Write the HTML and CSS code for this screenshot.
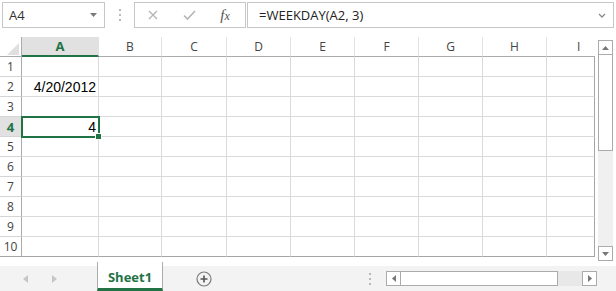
FILE: index.html
```html
<!DOCTYPE html>
<html lang="en">
<head>
    <meta charset="UTF-8">
    <title>WEEKDAY</title>
    <link rel="stylesheet" href="styles.css">
</head>
<body>
<div class="excel">
    <!-- formula bar -->
    <div class="toolbar">
        <div class="namebox">
            <span>A4</span>
            <svg class="caret" width="7" height="4" viewBox="0 0 7 4"><path d="M0 0h7L3.5 4z" fill="#7a7a7a"/></svg>
        </div>
        <div class="grip"><i></i><i></i><i></i></div>
        <div class="fxbox">
            <span class="fxbtn">
                <svg width="10" height="10" viewBox="0 0 10 10"><path d="M1 1l8 8M9 1l-8 8" stroke="#b4b4b4" stroke-width="1.3" fill="none"/></svg>
            </span>
            <span class="fxbtn">
                <svg width="13" height="10" viewBox="0 0 13 10"><path d="M1 5.5l3.5 3.5L12 1" stroke="#b4b4b4" stroke-width="1.6" fill="none"/></svg>
            </span>
            <span class="fxbtn fx"><i>f</i><i class="x">x</i></span>
        </div>
        <div class="formula">
            <span>=WEEKDAY(A2, 3)</span>
            <svg width="8" height="5" viewBox="0 0 8 5"><path d="M1 1l3 3 3-3" stroke="#8a8a8a" stroke-width="1.3" fill="none"/></svg>
        </div>
    </div>

    <!-- sheet -->
    <div class="sheet">
        <div class="grid">
            <div class="corner"><svg width="22" height="19" viewBox="0 0 22 19"><path d="M7 18L19 6v12z" fill="#dfdfdf"/></svg></div>
            <div class="ch sel">A</div>
            <div class="ch">B</div>
            <div class="ch">C</div>
            <div class="ch">D</div>
            <div class="ch">E</div>
            <div class="ch">F</div>
            <div class="ch">G</div>
            <div class="ch">H</div>
            <div class="ch last">I</div>

            <div class="rh">1</div><div class="c"></div><div class="c"></div><div class="c"></div><div class="c"></div><div class="c"></div><div class="c"></div><div class="c"></div><div class="c"></div><div class="c last"></div>
            <div class="rh">2</div><div class="c num">4/20/2012</div><div class="c"></div><div class="c"></div><div class="c"></div><div class="c"></div><div class="c"></div><div class="c"></div><div class="c"></div><div class="c last"></div>
            <div class="rh">3</div><div class="c"></div><div class="c"></div><div class="c"></div><div class="c"></div><div class="c"></div><div class="c"></div><div class="c"></div><div class="c"></div><div class="c last"></div>
            <div class="rh sel">4</div><div class="c num active">4<span class="cursor"><b class="handle"></b></span></div><div class="c"></div><div class="c"></div><div class="c"></div><div class="c"></div><div class="c"></div><div class="c"></div><div class="c"></div><div class="c last"></div>
            <div class="rh">5</div><div class="c"></div><div class="c"></div><div class="c"></div><div class="c"></div><div class="c"></div><div class="c"></div><div class="c"></div><div class="c"></div><div class="c last"></div>
            <div class="rh">6</div><div class="c"></div><div class="c"></div><div class="c"></div><div class="c"></div><div class="c"></div><div class="c"></div><div class="c"></div><div class="c"></div><div class="c last"></div>
            <div class="rh">7</div><div class="c"></div><div class="c"></div><div class="c"></div><div class="c"></div><div class="c"></div><div class="c"></div><div class="c"></div><div class="c"></div><div class="c last"></div>
            <div class="rh">8</div><div class="c"></div><div class="c"></div><div class="c"></div><div class="c"></div><div class="c"></div><div class="c"></div><div class="c"></div><div class="c"></div><div class="c last"></div>
            <div class="rh">9</div><div class="c"></div><div class="c"></div><div class="c"></div><div class="c"></div><div class="c"></div><div class="c"></div><div class="c"></div><div class="c"></div><div class="c last"></div>
            <div class="rh bottom">10</div><div class="c bottom"></div><div class="c bottom"></div><div class="c bottom"></div><div class="c bottom"></div><div class="c bottom"></div><div class="c bottom"></div><div class="c bottom"></div><div class="c bottom"></div><div class="c last bottom"></div>
        </div>
        <div class="vscroll">
            <div class="sbtn"><svg width="7" height="4" viewBox="0 0 7 4"><path d="M0 4h7L3.5 0z" fill="#777"/></svg></div>
            <div class="vthumb"></div>
            <div class="vtrack"></div>
            <div class="sbtn"><svg width="7" height="4" viewBox="0 0 7 4"><path d="M0 0h7L3.5 4z" fill="#777"/></svg></div>
        </div>
    </div>

    <!-- sheet tabs -->
    <div class="bottombar">
        <div class="tabnav">
            <svg width="5" height="8" viewBox="0 0 5 8"><path d="M5 0v8L0 4z" fill="#c6c6c6"/></svg>
            <svg width="5" height="8" viewBox="0 0 5 8"><path d="M0 0v8l5-4z" fill="#c6c6c6"/></svg>
        </div>
        <div class="tab">Sheet1</div>
        <svg class="addsheet" width="16" height="16" viewBox="0 0 16 16">
            <circle cx="8" cy="8" r="7" fill="none" stroke="#7a7a7a" stroke-width="1.2"/>
            <path d="M8 4.5v7M4.5 8h7" stroke="#555" stroke-width="1.6"/>
        </svg>
        <div class="grip small"><i></i><i></i><i></i></div>
        <div class="hscroll">
            <div class="sbtn"><svg width="4" height="7" viewBox="0 0 4 7"><path d="M4 0v7L0 3.5z" fill="#777"/></svg></div>
            <div class="hthumb"></div>
            <div class="htrack"></div>
            <div class="sbtn"><svg width="4" height="7" viewBox="0 0 4 7"><path d="M0 0v7l4-3.5z" fill="#777"/></svg></div>
        </div>
    </div>
</div>
</body>
</html>
```

FILE: styles.css
```css
* {
    box-sizing: border-box;
}
body {
    margin: 0;
    background: #fff;
    font-family: "Open Sans", "Noto Sans", sans-serif;
    color: #444;
}
.excel {
    width: 616px;
    height: 291px;
    display: flex;
    flex-direction: column;
    overflow: hidden;
}

/* formula bar */
.toolbar {
    height: 37px;
    flex: none;
    display: flex;
    align-items: flex-start;
    padding: 2px 2px 0 2px;
}
.namebox {
    width: 103px;
    height: 26px;
    border: 1px solid #c6c6c6;
    display: flex;
    align-items: center;
    justify-content: space-between;
    padding: 0 7px 0 6px;
    font-size: 13px;
    color: #333;
}
.grip {
    display: flex;
    flex-direction: column;
    gap: 3px;
    margin: 7px 13px 0 14px;
}
.grip i {
    display: block;
    width: 2px;
    height: 2px;
    background: #b8b8b8;
}
.fxbox {
    width: 112px;
    height: 26px;
    border: 1px solid #c6c6c6;
    display: flex;
    align-items: center;
}
.fxbtn {
    width: 36px;
    display: flex;
    justify-content: center;
    align-items: center;
}
.fx {
    font-family: "Liberation Serif", serif;
    font-size: 15px;
    color: #555;
}
.fx .x {
    font-size: 12px;
    margin-top: 3px;
}
.formula {
    flex: 1;
    height: 26px;
    margin-left: 1px;
    border: 1px solid #c6c6c6;
    display: flex;
    align-items: center;
    justify-content: space-between;
    padding: 0 7px 0 11px;
    font-size: 13px;
    color: #222;
}

/* grid */
.sheet {
    height: 225px;
    flex: none;
    display: flex;
}
.grid {
    display: grid;
    grid-template-columns: 22px 77px 63px 65px 64px 64px 64px 64px 64px 48px;
    grid-auto-rows: 20px;
    align-content: start;
}
.corner {
    border-bottom: 1px solid #ababab;
    border-right: 1px solid #ababab;
}
.corner svg {
    display: block;
}
.ch {
    border-bottom: 1px solid #ababab;
    border-right: 1px solid #e1e1e1;
    display: flex;
    align-items: center;
    justify-content: center;
    font-size: 12px;
    color: #444;
}
.ch.last {
    border-right: none;
    justify-content: flex-start;
    padding-left: 30px;
}
.ch.sel {
    background: #e1e1e1;
    border-bottom: 2px solid #217346;
    color: #217346;
    font-weight: bold;
    font-size: 13px;
}
.rh {
    border-right: 1px solid #ababab;
    border-bottom: 1px solid #d4d4d4;
    display: flex;
    align-items: center;
    justify-content: center;
    font-size: 12px;
    color: #444;
}
.rh.sel {
    background: #e1e1e1;
    color: #217346;
    font-weight: bold;
    font-size: 13px;
}
.c {
    border-right: 1px solid #dadada;
    border-bottom: 1px solid #dadada;
}
.c.last {
    border-right: 1px solid #a5a5a5;
}
.c.bottom,
.rh.bottom {
    border-bottom: 1px solid #a5a5a5;
}
.num {
    display: flex;
    align-items: center;
    justify-content: flex-end;
    padding-right: 2px;
    font-family: "Liberation Sans", Arial, sans-serif;
    font-size: 14px;
    color: #000;
}
.active {
    position: relative;
}
.cursor {
    position: absolute;
    left: -1px;
    top: -1px;
    width: 79px;
    height: 22px;
    border: 2px solid #217346;
}
.handle {
    position: absolute;
    right: -4px;
    bottom: -4px;
    width: 7px;
    height: 7px;
    background: #217346;
    border: 1px solid #fff;
}

/* scrollbars */
.vscroll {
    width: 15px;
    margin: 3px 0 1px 3px;
    display: flex;
    flex-direction: column;
    background: #f0f0f0;
}
.sbtn {
    width: 15px;
    height: 15px;
    flex: none;
    background: #fff;
    border: 1px solid #ababab;
    display: flex;
    align-items: center;
    justify-content: center;
}
.sbtn svg {
    display: block;
}
.vthumb {
    height: 96px;
    background: #fff;
    border: 1px solid #ababab;
    border-top: none;
}
.vtrack {
    flex: 1;
}

/* tabs */
.bottombar {
    height: 29px;
    flex: none;
    display: flex;
    align-items: center;
    padding-top: 4px;
    background: linear-gradient(#fff 4px, #f3f3f3 4px);
}
.tabnav {
    width: 97px;
    display: flex;
    align-items: center;
    gap: 24px;
    padding-left: 23px;
}
.tab {
    width: 66px;
    align-self: stretch;
    margin-top: -4px;
    background: #fff;
    border-left: 1px solid #ababab;
    border-right: 1px solid #ababab;
    border-bottom: 3px solid #217346;
    display: flex;
    align-items: center;
    justify-content: center;
    padding-top: 3px;
    font-size: 13px;
    font-weight: bold;
    color: #217346;
}
.addsheet {
    margin-left: 33px;
    display: block;
}
.grip.small {
    margin: 0 0 0 157px;
}
.hscroll {
    width: 211px;
    height: 15px;
    margin-left: 15px;
    display: flex;
    background: #e8e8e8;
}
.hthumb {
    width: 157px;
    background: #fff;
    border: 1px solid #ababab;
    border-left: none;
}
.htrack {
    flex: 1;
}
```
